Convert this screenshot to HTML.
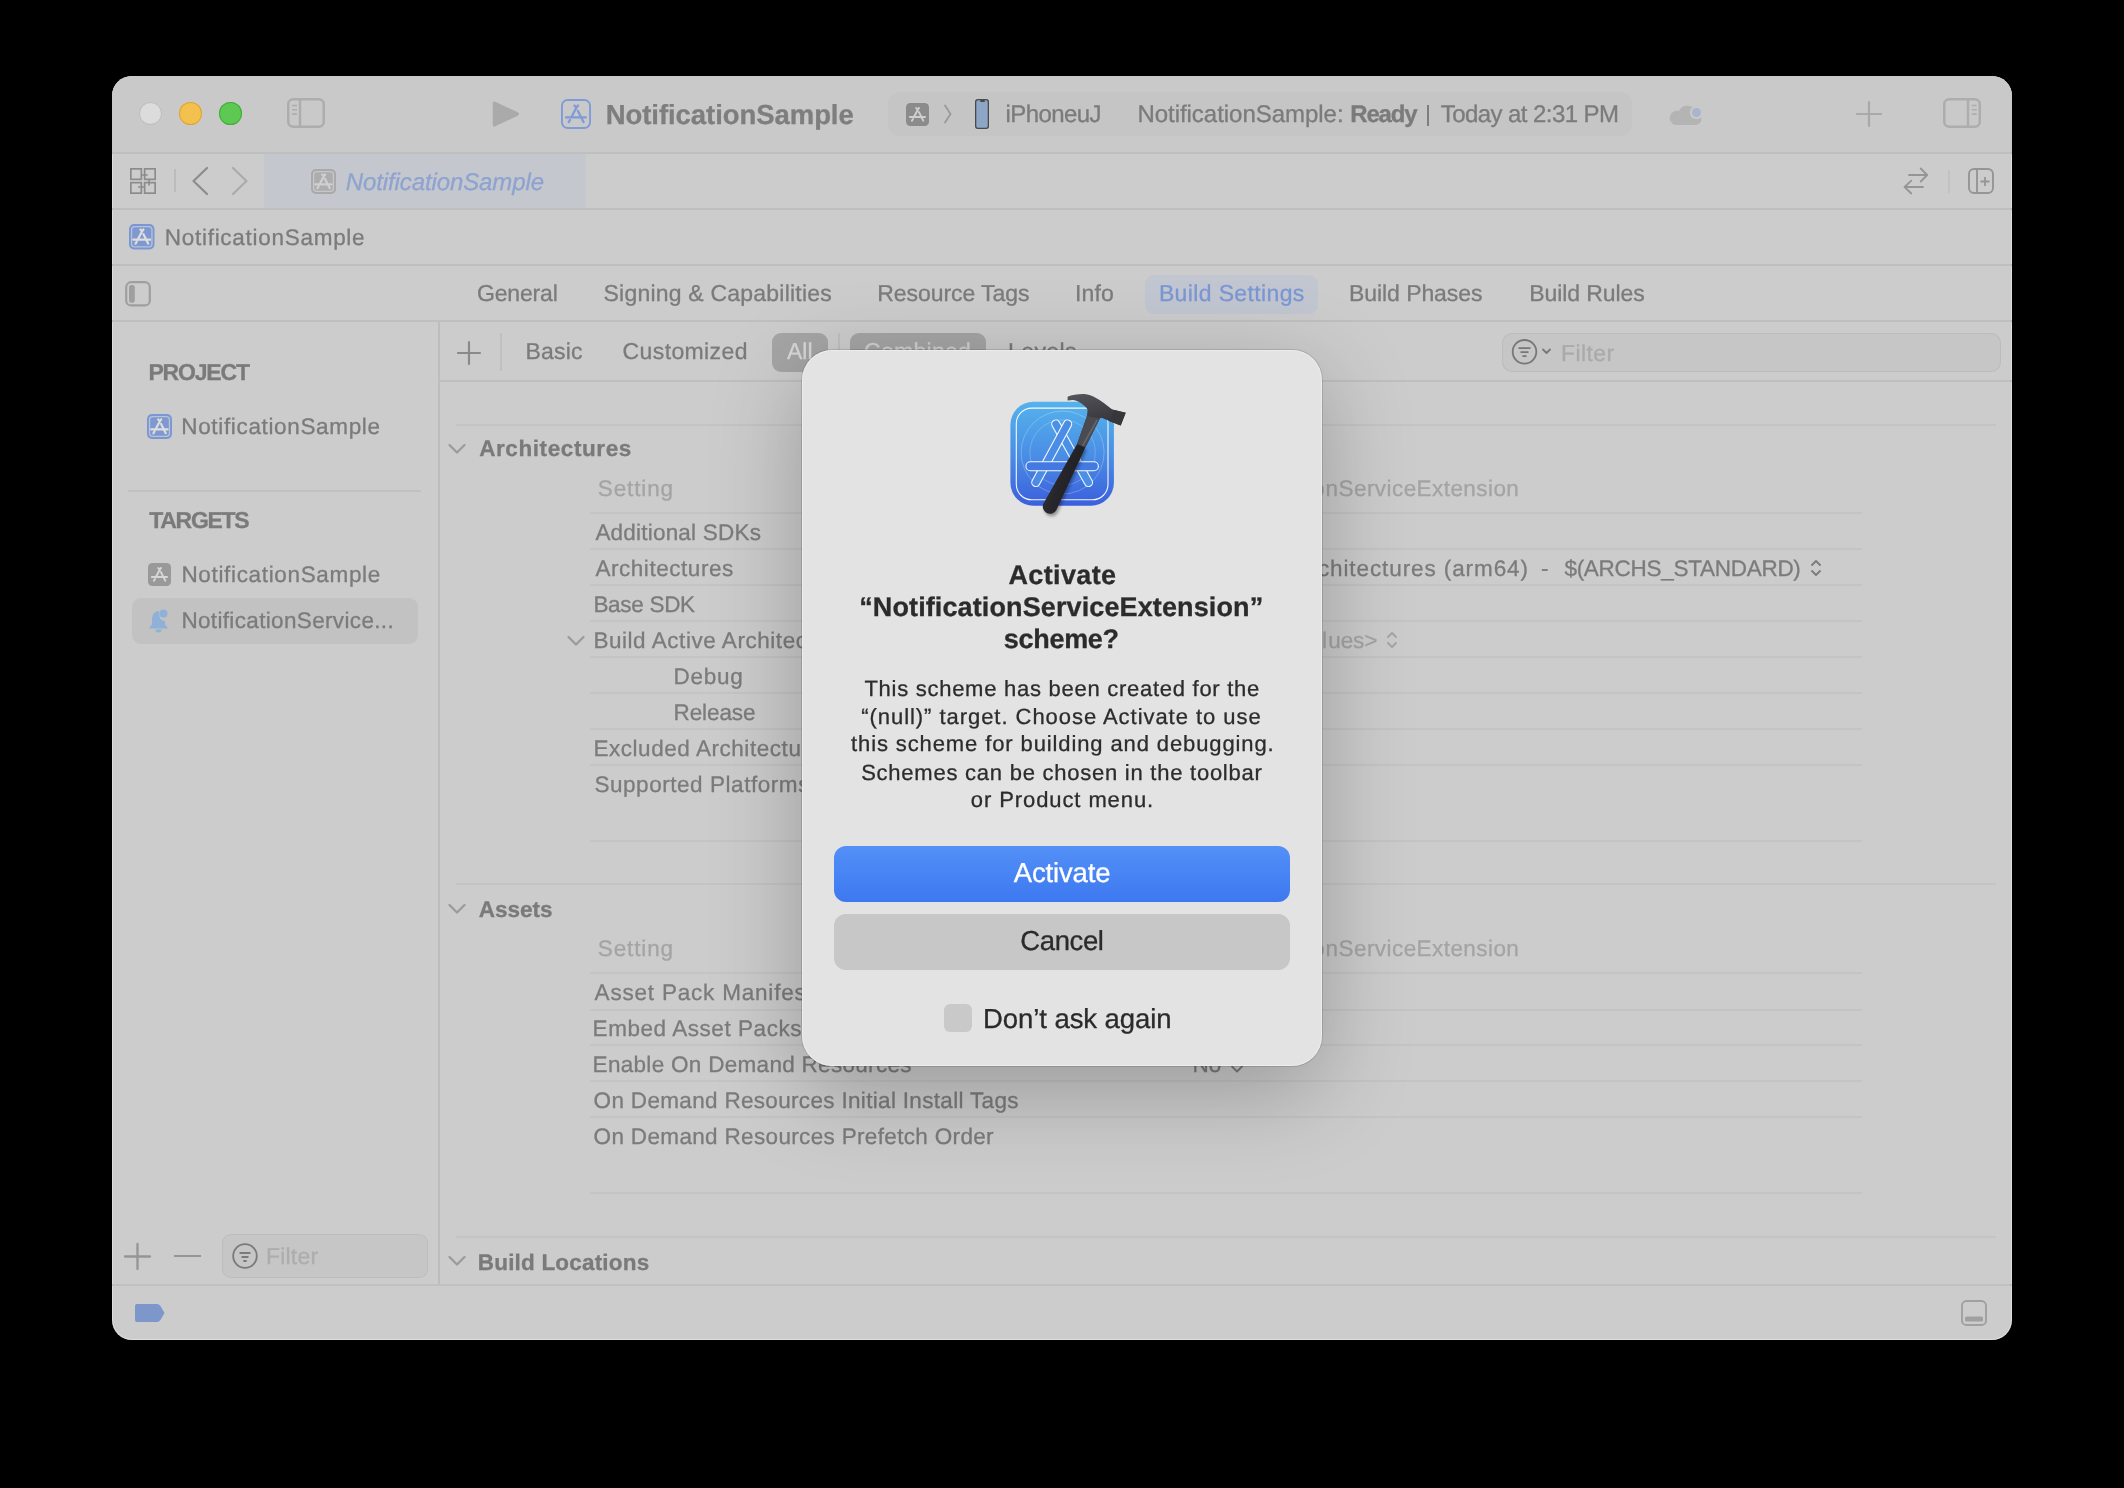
<!DOCTYPE html>
<html><head><meta charset="utf-8">
<style>
html,body{margin:0;padding:0;background:#000;width:2124px;height:1488px;overflow:hidden}
*{box-sizing:border-box}
.abs{position:absolute}
#win{position:absolute;left:112px;top:76px;width:1900px;height:1264px;border-radius:20px;background:#cccccc;overflow:hidden;box-shadow:inset 0 0 0 1px rgba(255,255,255,0.35)}
#pg{position:absolute;left:-112px;top:-76px;width:2124px;height:1488px}
.t{position:absolute;font-family:"Liberation Sans",sans-serif;line-height:1;white-space:pre;-webkit-text-stroke:0.3px currentColor;text-rendering:geometricPrecision}
#pg,#ov{will-change:transform}
.hl{position:absolute;height:2px;background:#bfbfbf}
.vl{position:absolute;width:2px;background:#bfbfbf}
svg{position:absolute;overflow:visible}
</style></head><body>
<div id="win"><div id="pg">
  <div class="abs" style="left:112px;top:76px;width:1900px;height:77px;background:#c9c9c9"></div>
  <!-- traffic lights -->
  <div class="abs" style="left:138.5px;top:102px;width:23px;height:23px;border-radius:50%;background:#dcdcdc;box-shadow:inset 0 0 0 1px #bdbdbd"></div>
  <div class="abs" style="left:178.5px;top:102px;width:23px;height:23px;border-radius:50%;background:#f4c04e;box-shadow:inset 0 0 0 1px #dba639"></div>
  <div class="abs" style="left:218.5px;top:102px;width:23px;height:23px;border-radius:50%;background:#5ec952;box-shadow:inset 0 0 0 1px #43ad3b"></div>
  <!-- sidebar toggle -->
  <svg style="left:287px;top:98px" width="38" height="30" viewBox="0 0 38 30"><rect x="1.25" y="1.25" width="35.5" height="27.5" rx="5" fill="none" stroke="#adadad" stroke-width="2.5"/><path d="M13 1.5V28.5" stroke="#adadad" stroke-width="2.5"/><path d="M5 7.5h5M5 11.8h5M5 16.1h5" stroke="#adadad" stroke-width="1.6"/></svg>
  <!-- play -->
  <svg style="left:492px;top:100px" width="28" height="28" viewBox="0 0 28 28"><path d="M3 2.5 Q1.5 1.6 1.5 3.5 V24.5 Q1.5 26.4 3 25.5 L25.5 15 Q27 14 25.5 13 Z" fill="#aaaaaa" stroke="#aaaaaa" stroke-width="1.5" stroke-linejoin="round"/></svg>
  <!-- app icon outline -->
  <svg style="left:561px;top:99px" width="30" height="30" viewBox="0 0 30 30"><rect x="0.95" y="0.95" width="28.1" height="28.1" rx="5.70" fill="none" stroke="#7f9bd8" stroke-width="1.9"/><g transform="scale(1.0000)"><path d="M16.1 7.4 L10.3 18.2 M13.4 6.6 L15.3 8.7 L17 6.5 M16.9 11.9 L22.5 23 M5 18.4 H24.8 M9.1 20.9 L7.7 23.1" fill="none" stroke="#7f9bd8" stroke-width="2.3" stroke-linecap="round" stroke-linejoin="round"/></g></svg>
  <!-- scheme pill -->
  <div class="abs" style="left:888px;top:92px;width:744px;height:44px;border-radius:12px;background:#c5c5c5"></div>

  <svg style="left:906px;top:103px" width="23" height="23" viewBox="0 0 23 23"><rect x="0" y="0" width="23" height="23" rx="4.37" fill="#8b8b8b"/><g transform="scale(0.7667)"><path d="M16.1 7.4 L10.3 18.2 M13.4 6.6 L15.3 8.7 L17 6.5 M16.9 11.9 L22.5 23 M5 18.4 H24.8 M9.1 20.9 L7.7 23.1" fill="none" stroke="#cfcfcf" stroke-width="2.6" stroke-linecap="round" stroke-linejoin="round"/></g></svg>
  <svg style="left:943px;top:104px" width="10" height="20" viewBox="0 0 10 20"><path d="M2 1.5 L7.5 10 L2 18.5" fill="none" stroke="#9a9a9a" stroke-width="1.8" stroke-linecap="round"/></svg>
  <div class="abs" style="left:975px;top:99px;width:14px;height:30px;border-radius:3px;background:#8ea6c6;box-shadow:inset 0 0 0 1.3px #4a4a4a"></div>
  <div class="abs" style="left:979.5px;top:100px;width:5px;height:1.5px;border-radius:1px;background:#4a4a4a"></div>
  <div class="abs" style="left:1427px;top:105px;width:2px;height:20.5px;background:#7e7e7e"></div>
  <!-- cloud -->
  <svg style="left:1668px;top:102px" width="36" height="26" viewBox="0 0 36 26"><path d="M7 23 H27 A6 6 0 0 0 28 11 A9 9 0 0 0 11 9 A7 7 0 0 0 7 23Z" fill="#b4b4b4"/><circle cx="28.5" cy="10.5" r="6.6" fill="#c9c9c9"/><circle cx="28.5" cy="10.5" r="4.5" fill="#a9b4cd"/></svg>
  <!-- plus -->
  <svg style="left:1856px;top:101px" width="26" height="26" viewBox="0 0 26 26"><path d="M13 1V25M1 13H25" stroke="#a9a9a9" stroke-width="2.2" stroke-linecap="round"/></svg>
  <!-- inspector toggle -->
  <svg style="left:1943px;top:98px" width="38" height="30" viewBox="0 0 38 30"><rect x="1.25" y="1.25" width="35.5" height="27.5" rx="5" fill="none" stroke="#adadad" stroke-width="2.5"/><path d="M25 1.5V28.5" stroke="#adadad" stroke-width="2.5"/><path d="M28.7 7.5h5M28.7 11.8h5M28.7 16.1h5" stroke="#adadad" stroke-width="1.6"/></svg>

  <div class="hl" style="left:112px;top:152px;width:1900px"></div>
  <!-- tab bar -->
  <div class="abs" style="left:264px;top:154px;width:322px;height:54px;background:#c4c7cd"></div>
  <svg style="left:130px;top:168px" width="26" height="26" viewBox="0 0 26 26"><g fill="none" stroke="#8c8c8c" stroke-width="1.7"><rect x="0.85" y="0.85" width="10.5" height="10.5"/><rect x="14.65" y="0.85" width="10.5" height="10.5"/><rect x="0.85" y="14.65" width="10.5" height="10.5"/><rect x="14.65" y="14.65" width="10.5" height="10.5"/></g><path d="M11.5 7H17.7M19.1 11.5V17.5M8.1 19H14.5" stroke="#8c8c8c" stroke-width="1.7"/></svg>
  <div class="abs" style="left:174px;top:169px;width:1.5px;height:23px;background:#bcbcbc"></div>
  <svg style="left:190px;top:166px" width="20" height="30" viewBox="0 0 20 30"><path d="M17 2 L3.5 15 L17 28" fill="none" stroke="#8c8c8c" stroke-width="2.2" stroke-linecap="round" stroke-linejoin="round"/></svg>
  <svg style="left:230px;top:166px" width="20" height="30" viewBox="0 0 20 30"><path d="M3 2 L16.5 15 L3 28" fill="none" stroke="#ababab" stroke-width="2.2" stroke-linecap="round" stroke-linejoin="round"/></svg>
  <svg style="left:311px;top:169px" width="25" height="25" viewBox="0 0 25 25"><rect x="0" y="0" width="25" height="25" rx="5.00" fill="#a9a9a9"/><rect x="1.9" y="1.9" width="21.2" height="21.2" rx="3.75" fill="#c4c7cd"/><rect x="3.2" y="3.2" width="18.6" height="18.6" rx="2.75" fill="#adadad"/><g transform="scale(0.8333)"><path d="M16.1 7.4 L10.3 18.2 M13.4 6.6 L15.3 8.7 L17 6.5 M16.9 11.9 L22.5 23 M5 18.4 H24.8 M9.1 20.9 L7.7 23.1" fill="none" stroke="#d0d0d0" stroke-width="2.6" stroke-linecap="round" stroke-linejoin="round"/></g></svg>
  <svg style="left:1903px;top:167px" width="26" height="28" viewBox="0 0 26 28"><g fill="none" stroke="#959595" stroke-width="1.8" stroke-linecap="round" stroke-linejoin="round"><path d="M6 8 H24 M17.7 1.5 L24.2 8 L17.7 14.5"/><path d="M20 20 H1.5 M8.3 13.6 L1.5 20 L8.3 26.5"/></g></svg>
  <div class="abs" style="left:1948px;top:169.5px;width:1.5px;height:23px;background:#c2c2c2"></div>
  <svg style="left:1968px;top:168px" width="26" height="26" viewBox="0 0 26 26"><rect x="1" y="1" width="24" height="24" rx="5" fill="none" stroke="#959595" stroke-width="1.9"/><path d="M9 1.5V24.5" stroke="#959595" stroke-width="1.9"/><path d="M17 9V18M12.5 13.5H21.5" stroke="#959595" stroke-width="1.8"/></svg>
  <div class="hl" style="left:112px;top:208px;width:1900px"></div>
  <!-- jump bar -->
  <svg style="left:129px;top:223.5px" width="25.5" height="25.5" viewBox="0 0 25.5 25.5"><rect x="0" y="0" width="25.5" height="25.5" rx="5.10" fill="#7b97d3"/><rect x="1.9" y="1.9" width="21.7" height="21.7" rx="3.82" fill="#b9c3d8"/><rect x="3.2" y="3.2" width="19.1" height="19.1" rx="2.81" fill="#7f98cf"/><g transform="scale(0.8500)"><path d="M16.1 7.4 L10.3 18.2 M13.4 6.6 L15.3 8.7 L17 6.5 M16.9 11.9 L22.5 23 M5 18.4 H24.8 M9.1 20.9 L7.7 23.1" fill="none" stroke="#dedede" stroke-width="2.6" stroke-linecap="round" stroke-linejoin="round"/></g></svg>
  <div class="hl" style="left:112px;top:264px;width:1900px"></div>
  <!-- editor tabs row -->
  <svg style="left:125px;top:281px" width="26" height="26" viewBox="0 0 26 26"><rect x="1.2" y="1.2" width="23.6" height="23.2" rx="5" fill="none" stroke="#9f9f9f" stroke-width="2.2"/><rect x="4" y="4" width="5.8" height="17.8" rx="2.2" fill="#9f9f9f"/></svg>
  <div class="abs" style="left:1145px;top:275px;width:173px;height:39px;border-radius:9px;background:#c1c6d0"></div>
  <div class="hl" style="left:112px;top:320px;width:1900px"></div>
  <!-- sidebar -->
  <div class="vl" style="left:438px;top:321px;height:964px;background:#bdbdbd"></div>
  <svg style="left:147px;top:413.7px" width="25" height="25" viewBox="0 0 25 25"><rect x="0" y="0" width="25" height="25" rx="5.00" fill="#7b97d3"/><rect x="1.9" y="1.9" width="21.2" height="21.2" rx="3.75" fill="#b9c3d8"/><rect x="3.2" y="3.2" width="18.6" height="18.6" rx="2.75" fill="#7f98cf"/><g transform="scale(0.8333)"><path d="M16.1 7.4 L10.3 18.2 M13.4 6.6 L15.3 8.7 L17 6.5 M16.9 11.9 L22.5 23 M5 18.4 H24.8 M9.1 20.9 L7.7 23.1" fill="none" stroke="#dedede" stroke-width="2.6" stroke-linecap="round" stroke-linejoin="round"/></g></svg>
  <div class="hl" style="left:128px;top:490px;width:293px;background:#c0c0c0"></div>
  <svg style="left:148px;top:563px" width="23" height="23" viewBox="0 0 23 23"><rect x="0" y="0" width="23" height="23" rx="4.37" fill="#999999"/><g transform="scale(0.7667)"><path d="M16.1 7.4 L10.3 18.2 M13.4 6.6 L15.3 8.7 L17 6.5 M16.9 11.9 L22.5 23 M5 18.4 H24.8 M9.1 20.9 L7.7 23.1" fill="none" stroke="#d6d6d6" stroke-width="2.6" stroke-linecap="round" stroke-linejoin="round"/></g></svg>
  <div class="abs" style="left:132px;top:598px;width:286px;height:46px;border-radius:9px;background:#c2c2c2"></div>
  <svg style="left:148px;top:608px" width="24" height="25" viewBox="0 0 24 25"><path d="M10.5 3 C5.5 3.5 4 8 4 12 V16.5 L1.5 19.5 V20.5 H19.5 V19.5 L17 16.5 V13 C13 13 11 10 11.5 6 Z" fill="#8fb1d7"/><circle cx="15.5" cy="5.5" r="4" fill="#8fb1d7"/><path d="M7.5 21.5 A3 3 0 0 0 13.5 21.5Z" fill="#8fb1d7"/></svg>
  <!-- sidebar bottom -->
  <svg style="left:124px;top:1243px" width="27" height="27" viewBox="0 0 27 27"><path d="M13.5 1V26M1 13.5H26" stroke="#959595" stroke-width="2.3" stroke-linecap="round"/></svg>
  <div class="abs" style="left:174px;top:1255px;width:27px;height:2px;background:#959595"></div>
  <div class="abs" style="left:222px;top:1234px;width:206px;height:43.5px;border-radius:9px;background:#c6c6c6;box-shadow:inset 0 0 0 1px #bdbdbd"></div>
  <svg style="left:232px;top:1243px" width="26" height="26" viewBox="0 0 26 26"><circle cx="13" cy="13" r="11.8" fill="none" stroke="#7a7a7a" stroke-width="1.8"/><path d="M7.5 10H18.5M9.5 14H16.5M11.3 18H14.7" stroke="#7a7a7a" stroke-width="1.8"/></svg>
  <div class="hl" style="left:112px;top:1284px;width:1900px;background:#c0c0c0"></div>
  <svg style="left:134px;top:1303px" width="32" height="20" viewBox="0 0 32 20"><path d="M3 1 H23 Q25 1 26.5 3 L30.5 10 L26.5 17 Q25 19 23 19 H3 Q1 19 1 17 V3 Q1 1 3 1Z" fill="#7e97cb"/></svg>
  <svg style="left:1960.5px;top:1300px" width="26" height="26" viewBox="0 0 26 26"><rect x="1" y="1" width="24" height="24" rx="4.5" fill="none" stroke="#a0a0a0" stroke-width="1.9"/><rect x="4" y="16.5" width="18" height="5" rx="1.5" fill="#a0a0a0"/></svg>

  <!-- build settings toolbar -->
  <svg style="left:457px;top:341px" width="24" height="24" viewBox="0 0 24 24"><path d="M12 1V23M1 12H23" stroke="#8a8a8a" stroke-width="2.2" stroke-linecap="round"/></svg>
  <div class="abs" style="left:500px;top:333px;width:1.5px;height:38px;background:#c0c0c0"></div>
  <div class="abs" style="left:772px;top:332.5px;width:56px;height:39px;border-radius:9px;background:#a5a5a5"></div>
  <div class="abs" style="left:838px;top:333px;width:1.5px;height:38px;background:#c0c0c0"></div>
  <div class="abs" style="left:850px;top:332.5px;width:136px;height:39px;border-radius:9px;background:#a5a5a5"></div>
  <div class="abs" style="left:1502px;top:332.5px;width:499px;height:39px;border-radius:10px;background:#c6c6c6;box-shadow:inset 0 0 0 1px #bcbcbc"></div>
  <svg style="left:1511px;top:339px" width="44" height="26" viewBox="0 0 44 26"><circle cx="13.5" cy="12.8" r="11.8" fill="none" stroke="#777777" stroke-width="1.8"/><path d="M7.5 9.2H19.5M9.5 13.2H17.5M11.5 17.2H15.5" stroke="#777777" stroke-width="1.8"/><path d="M32 10.5 L35.5 14 L39 10.5" fill="none" stroke="#777777" stroke-width="1.8" stroke-linecap="round" stroke-linejoin="round"/></svg>
  <div class="hl" style="left:438px;top:380px;width:1574px"></div>

  <!-- content lines -->
  <div class="hl" style="left:456px;top:424px;width:1540px;background:#c4c4c4"></div>
  <svg style="left:447px;top:442px" width="20" height="14" viewBox="0 0 20 14"><path d="M2.5 3 L10 10.5 L17.5 3" fill="none" stroke="#9a9a9a" stroke-width="2.2" stroke-linecap="round" stroke-linejoin="round"/></svg>
  <div class="hl" style="left:590px;top:512px;width:1272px;background:#c4c4c4"></div>
  <div class="hl" style="left:590px;top:548px;width:1272px;background:#c4c4c4"></div>
  <div class="hl" style="left:590px;top:584px;width:1272px;background:#c4c4c4"></div>
  <div class="hl" style="left:590px;top:620px;width:1272px;background:#c4c4c4"></div>
  <div class="hl" style="left:590px;top:656px;width:1272px;background:#c4c4c4"></div>
  <div class="hl" style="left:590px;top:692px;width:1272px;background:#c4c4c4"></div>
  <div class="hl" style="left:590px;top:728px;width:1272px;background:#c4c4c4"></div>
  <div class="hl" style="left:590px;top:764px;width:1272px;background:#c4c4c4"></div>
  <div class="hl" style="left:590px;top:840px;width:1272px;background:#c4c4c4"></div>
  <div class="hl" style="left:456px;top:883px;width:1540px;background:#c4c4c4"></div>
  <svg style="left:566px;top:634px" width="20" height="14" viewBox="0 0 20 14"><path d="M2.5 3 L10 10.5 L17.5 3" fill="none" stroke="#9a9a9a" stroke-width="2.2" stroke-linecap="round" stroke-linejoin="round"/></svg>
  <svg style="left:1809px;top:558px" width="14" height="20" viewBox="0 0 14 20"><path d="M3 7 L7 3 L11 7M3 13 L7 17 L11 13" fill="none" stroke="#7b7b7b" stroke-width="1.8" stroke-linecap="round" stroke-linejoin="round"/></svg>
  <svg style="left:1385px;top:630px" width="14" height="20" viewBox="0 0 14 20"><path d="M3 7 L7 3 L11 7M3 13 L7 17 L11 13" fill="none" stroke="#a4a4a4" stroke-width="1.8" stroke-linecap="round" stroke-linejoin="round"/></svg>
  <svg style="left:447px;top:902px" width="20" height="14" viewBox="0 0 20 14"><path d="M2.5 3 L10 10.5 L17.5 3" fill="none" stroke="#9a9a9a" stroke-width="2.2" stroke-linecap="round" stroke-linejoin="round"/></svg>
  <div class="hl" style="left:590px;top:972px;width:1272px;background:#c4c4c4"></div>
  <div class="hl" style="left:590px;top:1008.5px;width:1272px;background:#c4c4c4"></div>
  <div class="hl" style="left:590px;top:1044px;width:1272px;background:#c4c4c4"></div>
  <div class="hl" style="left:590px;top:1080px;width:1272px;background:#c4c4c4"></div>
  <div class="hl" style="left:590px;top:1115.5px;width:1272px;background:#c4c4c4"></div>
  <div class="hl" style="left:590px;top:1191.5px;width:1272px;background:#c4c4c4"></div>
  <div class="hl" style="left:456px;top:1236px;width:1540px;background:#c4c4c4"></div>
  <svg style="left:1229px;top:1062px" width="16" height="12" viewBox="0 0 16 12"><path d="M3 4.5 L8 9.5 L13 4.5" fill="none" stroke="#7b7b7b" stroke-width="1.8" stroke-linecap="round" stroke-linejoin="round"/></svg>
  <svg style="left:447px;top:1254px" width="20" height="14" viewBox="0 0 20 14"><path d="M2.5 3 L10 10.5 L17.5 3" fill="none" stroke="#9a9a9a" stroke-width="2.2" stroke-linecap="round" stroke-linejoin="round"/></svg>

<span class="t" style="left:605.7px;top:100.9px;font-size:27.5px;color:#7e7e7e;letter-spacing:-0.059px;font-weight:bold;">NotificationSample</span>
<span class="t" style="left:1005.6px;top:103.3px;font-size:24px;color:#7b7b7b;letter-spacing:-0.600px;">iPhoneuJ</span>
<span class="t" style="left:1137.4px;top:103.3px;font-size:24px;color:#7b7b7b;letter-spacing:-0.033px;">NotificationSample:</span>
<span class="t" style="left:1350.3px;top:103.3px;font-size:24px;color:#7b7b7b;letter-spacing:-1.200px;font-weight:bold;">Ready</span>
<span class="t" style="left:1440.7px;top:103.3px;font-size:24px;color:#7b7b7b;letter-spacing:-0.560px;">Today at 2:31 PM</span>
<span class="t" style="left:345.7px;top:170.7px;font-size:24px;color:#8ea3d0;letter-spacing:-0.100px;font-style:italic;">NotificationSample</span>
<span class="t" style="left:164.8px;top:227.0px;font-size:22.5px;color:#7b7b7b;letter-spacing:0.718px;">NotificationSample</span>
<span class="t" style="left:477.0px;top:282.0px;font-size:23px;color:#7b7b7b;letter-spacing:-0.167px;">General</span>
<span class="t" style="left:603.5px;top:282.0px;font-size:23px;color:#7b7b7b;letter-spacing:0.214px;">Signing &amp; Capabilities</span>
<span class="t" style="left:877.2px;top:282.0px;font-size:23px;color:#7b7b7b;letter-spacing:-0.058px;">Resource Tags</span>
<span class="t" style="left:1074.9px;top:282.0px;font-size:23px;color:#7b7b7b;letter-spacing:0.167px;">Info</span>
<span class="t" style="left:1349.1px;top:282.0px;font-size:23px;color:#7b7b7b;letter-spacing:-0.082px;">Build Phases</span>
<span class="t" style="left:1529.2px;top:282.0px;font-size:23px;color:#7b7b7b;letter-spacing:-0.070px;">Build Rules</span>
<span class="t" style="left:1158.9px;top:282.0px;font-size:23px;color:#7b97d4;letter-spacing:0.369px;">Build Settings</span>
<span class="t" style="left:148.4px;top:361.1px;font-size:23px;color:#7a7a7a;letter-spacing:-1.183px;font-weight:bold;">PROJECT</span>
<span class="t" style="left:181.3px;top:415.6px;font-size:22.5px;color:#7b7b7b;letter-spacing:0.653px;">NotificationSample</span>
<span class="t" style="left:149.2px;top:508.6px;font-size:23px;color:#7a7a7a;letter-spacing:-1.283px;font-weight:bold;">TARGETS</span>
<span class="t" style="left:181.4px;top:564.2px;font-size:22.5px;color:#7b7b7b;letter-spacing:0.665px;">NotificationSample</span>
<span class="t" style="left:181.4px;top:609.7px;font-size:22.5px;color:#7b7b7b;letter-spacing:0.343px;">NotificationService...</span>
<span class="t" style="left:266.0px;top:1245.0px;font-size:23px;color:#adadad;letter-spacing:0.200px;">Filter</span>
<span class="t" style="left:525.6px;top:340.2px;font-size:23px;color:#7b7b7b;letter-spacing:0.150px;">Basic</span>
<span class="t" style="left:622.6px;top:340.2px;font-size:23px;color:#7b7b7b;letter-spacing:0.378px;">Customized</span>
<span class="t" style="left:787.0px;top:340.2px;font-size:23px;color:#d8d8d8;">All</span>
<span class="t" style="left:864.0px;top:340.2px;font-size:23px;color:#d0d0d0;letter-spacing:0.286px;">Combined</span>
<span class="t" style="left:1008.0px;top:340.2px;font-size:23px;color:#7b7b7b;letter-spacing:0.400px;">Levels</span>
<span class="t" style="left:1561.0px;top:341.6px;font-size:23px;color:#aaaaaa;letter-spacing:0.400px;">Filter</span>
<span class="t" style="left:479.2px;top:437.8px;font-size:22.5px;color:#7a7a7a;letter-spacing:0.583px;font-weight:bold;">Architectures</span>
<span class="t" style="left:597.8px;top:477.7px;font-size:22.5px;color:#a4a4a4;letter-spacing:0.867px;">Setting</span>
<span class="t" style="left:1325.6px;top:477.5px;font-size:22.5px;color:#a4a4a4;letter-spacing:0.431px;">nServiceExtension</span>
<span class="t" style="left:1312.0px;top:477.5px;font-size:22.5px;color:#a4a4a4;">o</span>
<span class="t" style="left:595.4px;top:522.0px;font-size:22.5px;color:#7b7b7b;letter-spacing:0.207px;">Additional SDKs</span>
<span class="t" style="left:595.4px;top:558.0px;font-size:22.5px;color:#7b7b7b;letter-spacing:0.550px;">Architectures</span>
<span class="t" style="left:593.4px;top:594.0px;font-size:22.5px;color:#7b7b7b;letter-spacing:-0.300px;">Base SDK</span>
<span class="t" style="left:593.4px;top:630.0px;font-size:22.5px;color:#7b7b7b;letter-spacing:0.550px;">Build Active Architecture Only</span>
<span class="t" style="left:673.6px;top:666.0px;font-size:22.5px;color:#7b7b7b;letter-spacing:0.700px;">Debug</span>
<span class="t" style="left:673.6px;top:702.0px;font-size:22.5px;color:#7b7b7b;letter-spacing:-0.117px;">Release</span>
<span class="t" style="left:593.4px;top:738.0px;font-size:22.5px;color:#7b7b7b;letter-spacing:0.550px;">Excluded Architectures</span>
<span class="t" style="left:594.4px;top:774.0px;font-size:22.5px;color:#7b7b7b;letter-spacing:0.550px;">Supported Platforms</span>
<span class="t" style="left:1330.0px;top:558.0px;font-size:22.5px;color:#7b7b7b;letter-spacing:0.906px;">hitectures (arm64)</span>
<span class="t" style="left:1541.0px;top:558.0px;font-size:22.5px;color:#7b7b7b;">-</span>
<span class="t" style="left:1564.4px;top:558.0px;font-size:22.5px;color:#7b7b7b;letter-spacing:-0.275px;">$(ARCHS_STANDARD)</span>
<span class="t" style="left:1318.0px;top:558.0px;font-size:22.5px;color:#7b7b7b;">c</span>
<span class="t" style="left:1328.2px;top:630.0px;font-size:22.5px;color:#a4a4a4;letter-spacing:-0.067px;">ues&gt;</span>
<span class="t" style="left:1322.0px;top:630.0px;font-size:22.5px;color:#a4a4a4;">l</span>
<span class="t" style="left:478.8px;top:898.8px;font-size:22.5px;color:#7a7a7a;font-weight:bold;">Assets</span>
<span class="t" style="left:597.8px;top:938.3px;font-size:22.5px;color:#a4a4a4;letter-spacing:0.867px;">Setting</span>
<span class="t" style="left:1325.6px;top:937.6px;font-size:22.5px;color:#a4a4a4;letter-spacing:0.431px;">nServiceExtension</span>
<span class="t" style="left:1312.0px;top:937.6px;font-size:22.5px;color:#a4a4a4;">o</span>
<span class="t" style="left:594.6px;top:981.5px;font-size:22.5px;color:#7b7b7b;letter-spacing:0.800px;">Asset Pack Manifest URL Prefix</span>
<span class="t" style="left:592.6px;top:1017.5px;font-size:22.5px;color:#7b7b7b;letter-spacing:0.550px;">Embed Asset Packs In Product Bundle</span>
<span class="t" style="left:592.6px;top:1053.5px;font-size:22.5px;color:#7b7b7b;letter-spacing:0.300px;">Enable On Demand Resources</span>
<span class="t" style="left:593.6px;top:1089.5px;font-size:22.5px;color:#7b7b7b;letter-spacing:0.323px;">On Demand Resources Initial Install Tags</span>
<span class="t" style="left:593.6px;top:1125.5px;font-size:22.5px;color:#7b7b7b;letter-spacing:0.336px;">On Demand Resources Prefetch Order</span>
<span class="t" style="left:1192.6px;top:1053.5px;font-size:22.5px;color:#7b7b7b;">No</span>
<span class="t" style="left:477.8px;top:1251.5px;font-size:22.5px;color:#7a7a7a;letter-spacing:0.186px;font-weight:bold;">Build Locations</span>
</div></div>

<!-- dialog -->
<div class="abs" style="left:802px;top:350px;width:520px;height:716px;border-radius:30px;background:#e3e3e3;box-shadow:0 25px 90px rgba(0,0,0,0.25),0 0 0 1px rgba(0,0,0,0.13),inset 0 0 0 1px rgba(255,255,255,0.35)"></div>
<!-- xcode icon -->
<svg style="left:1000px;top:385px" width="135" height="135" viewBox="0 0 135 135">
  <defs>
    <linearGradient id="xg" x1="0" y1="0" x2="0" y2="1"><stop offset="0" stop-color="#55b2ec"/><stop offset="0.5" stop-color="#4a8fe6"/><stop offset="1" stop-color="#3b5fdc"/></linearGradient>
    <linearGradient id="gripg" x1="0" y1="0" x2="1" y2="0.45"><stop offset="0" stop-color="#3a3a40"/><stop offset="0.5" stop-color="#26262b"/><stop offset="1" stop-color="#1e1e22"/></linearGradient>
    <linearGradient id="headg" x1="0" y1="0" x2="0.3" y2="1"><stop offset="0" stop-color="#55555c"/><stop offset="1" stop-color="#26262b"/></linearGradient>
    <filter id="hs" x="-20%" y="-20%" width="140%" height="140%"><feGaussianBlur stdDeviation="1.5"/></filter>
  </defs>
  <rect x="10.4" y="16.8" width="103.5" height="103.9" rx="23" fill="url(#xg)"/>
  <rect x="16.3" y="23.1" width="91.7" height="91.7" rx="15.5" fill="none" stroke="#ffffff" stroke-opacity="0.95" stroke-width="1.1"/>
  <circle cx="62.6" cy="67.5" r="41.5" fill="none" stroke="#ffffff" stroke-opacity="0.35" stroke-width="0.7"/>
  <circle cx="62.6" cy="67.5" r="32.7" fill="none" stroke="#ffffff" stroke-opacity="0.3" stroke-width="0.7"/>
  <g fill="#ffffff" fill-opacity="0.08" stroke="#ffffff" stroke-opacity="0.95" stroke-width="1.1">
    <path d="M55.8 39 L88.5 97.5" stroke-width="9.2" stroke-linecap="round" stroke="#ffffff" stroke-opacity="0.95"/>
    <path d="M55.8 39 L88.5 97.5" stroke-width="7" stroke-linecap="round" stroke="#4a90e6" stroke-opacity="1"/>
    <path d="M67.6 39 L35.8 97.5" stroke-width="9.2" stroke-linecap="round" stroke="#ffffff" stroke-opacity="0.95"/>
    <path d="M67.6 39 L35.8 97.5" stroke-width="7" stroke-linecap="round" stroke="#4b8de6" stroke-opacity="1"/>
    <rect x="25.9" y="76.7" width="72.5" height="9" rx="4.5" fill="#4479e2" fill-opacity="1"/>
  </g>
  <g filter="url(#hs)" opacity="0.35" transform="translate(1.5,2.5)">
    <path d="M85.3 62.6 L77.1 59 L43.6 118.3 A7.2 7.2 0 0 0 56.4 124.9Z" fill="#000"/>
  </g>
  <path d="M67.6 11.8 C 72 9.8, 78 9, 84.4 9.1 C 92 9.5, 100 15, 111.6 24 L114.3 24.9 L125.7 27.7 L120.7 40.4 L109.8 36.3 L101.6 32.7 L99.8 33.6 L85.3 62.6 L77.1 59 L87 31 L87.6 24.5 C 85 20, 78 15.5, 72.6 15 L67.6 15.5 Z" fill="url(#headg)"/>
  <path d="M114.3 24.9 L125.7 27.7 L120.7 40.4 L109.8 36.3Z" fill="#36363b"/>
  <path d="M99.8 33.6 L85.3 62.6 L77.1 59 L87 31Z" fill="#4a4a51"/><path d="M97 35 L82.5 61" fill="none" stroke="#65656d" stroke-width="1.6"/>
  <path d="M85.3 62.6 L77.1 59 L43.6 118.3 A7.2 7.2 0 0 0 56.4 124.9Z" fill="url(#gripg)"/>
</svg>
<div class="abs" style="left:834px;top:846px;width:456px;height:56px;border-radius:12px;background:linear-gradient(#5390f7,#3d78f0)"></div>
<div class="abs" style="left:834px;top:914px;width:456px;height:56px;border-radius:12px;background:#c7c7c7"></div>
<div class="abs" style="left:944px;top:1004px;width:28px;height:28px;border-radius:6px;background:#c9c9c9"></div>
<div id="ov" style="position:absolute;left:0;top:0;width:2124px;height:1488px">
<span class="t" style="left:1008.5px;top:561.9px;font-size:27px;color:#2b2b2b;letter-spacing:0.357px;font-weight:bold;">Activate</span>
<span class="t" style="left:859.2px;top:594.1px;font-size:27px;color:#2b2b2b;letter-spacing:0.117px;font-weight:bold;">“NotificationServiceExtension”</span>
<span class="t" style="left:1003.8px;top:625.9px;font-size:27px;color:#2b2b2b;letter-spacing:-0.300px;font-weight:bold;">scheme?</span>
<span class="t" style="left:864.4px;top:677.8px;font-size:22px;color:#2c2c2c;letter-spacing:0.731px;">This scheme has been created for the</span>
<span class="t" style="left:861.2px;top:706.2px;font-size:22px;color:#2c2c2c;letter-spacing:0.955px;">“(null)” target. Choose Activate to use</span>
<span class="t" style="left:851.0px;top:733.3px;font-size:22px;color:#2c2c2c;letter-spacing:0.889px;">this scheme for building and debugging.</span>
<span class="t" style="left:861.2px;top:761.9px;font-size:22px;color:#2c2c2c;letter-spacing:0.754px;">Schemes can be chosen in the toolbar</span>
<span class="t" style="left:970.8px;top:789.4px;font-size:22px;color:#2c2c2c;letter-spacing:0.907px;">or Product menu.</span>
<span class="t" style="left:1013.7px;top:859.1px;font-size:27.5px;color:#ffffff;letter-spacing:-0.143px;">Activate</span>
<span class="t" style="left:1020.3px;top:927.2px;font-size:27.5px;color:#2a2a2a;letter-spacing:-0.400px;">Cancel</span>
<span class="t" style="left:983.0px;top:1004.8px;font-size:27.5px;color:#2a2a2a;letter-spacing:-0.071px;">Don’t ask again</span>
</div>
</body></html>
